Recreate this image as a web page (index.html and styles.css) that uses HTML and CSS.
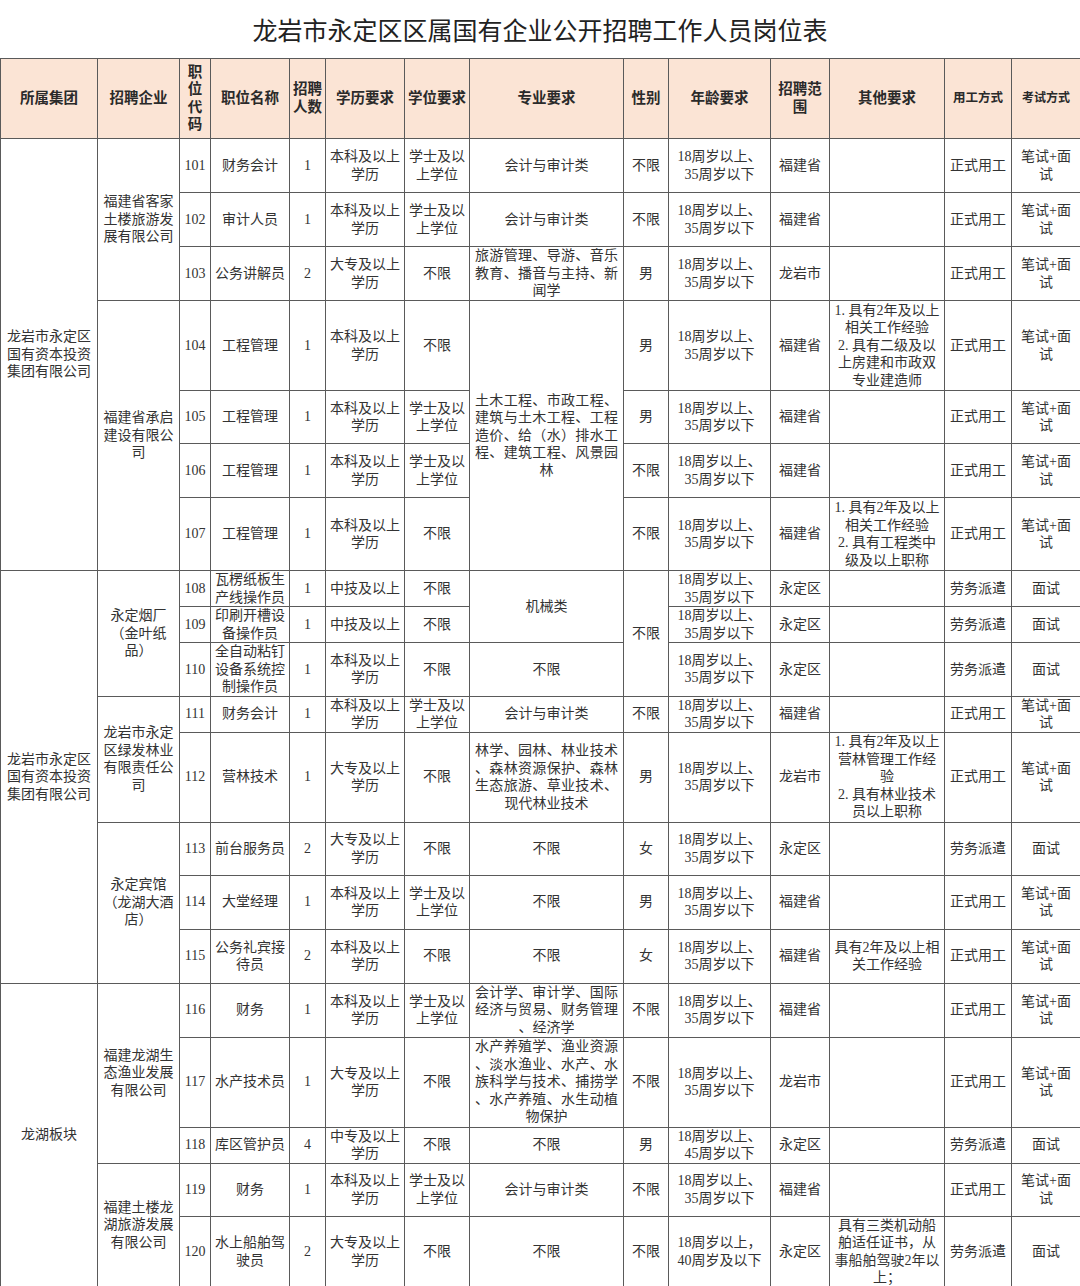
FILE: index.html
```html
<!DOCTYPE html>
<html lang="zh-CN">
<head>
<meta charset="utf-8">
<title>龙岩市永定区区属国有企业公开招聘工作人员岗位表</title>
<link rel="stylesheet" href="styles.css">
</head>
<body>
<div class="title">龙岩市永定区区属国有企业公开招聘工作人员岗位表</div>
<table class="jobs">
<colgroup>
<col class="c1"><col class="c2"><col class="c3"><col class="c4"><col class="c5"><col class="c6"><col class="c7"><col class="c8"><col class="c9"><col class="c10"><col class="c11"><col class="c12"><col class="c13"><col class="c14">
</colgroup>
<thead>
<tr class="hd">
<th>所属集团</th><th>招聘企业</th><th>职<br>位<br>代<br>码</th><th>职位名称</th><th>招聘<br>人数</th><th>学历要求</th><th>学位要求</th><th>专业要求</th><th>性别</th><th>年龄要求</th><th>招聘范<br>围</th><th>其他要求</th><th class="sm1">用工方式</th><th class="sm2">考试方式</th>
</tr>
</thead>
<tbody>
<tr class="h54">
<td rowspan="7">龙岩市永定区<br>国有资本投资<br>集团有限公司</td>
<td rowspan="3">福建省客家<br>土楼旅游发<br>展有限公司</td>
<td>101</td><td>财务会计</td><td>1</td><td>本科及以上<br>学历</td><td>学士及以<br>上学位</td><td>会计与审计类</td><td>不限</td><td>18周岁以上、<br>35周岁以下</td><td>福建省</td><td></td><td>正式用工</td><td>笔试+面<br>试</td>
</tr>
<tr class="h54">
<td>102</td><td>审计人员</td><td>1</td><td>本科及以上<br>学历</td><td>学士及以<br>上学位</td><td>会计与审计类</td><td>不限</td><td>18周岁以上、<br>35周岁以下</td><td>福建省</td><td></td><td>正式用工</td><td>笔试+面<br>试</td>
</tr>
<tr class="h54">
<td>103</td><td>公务讲解员</td><td>2</td><td>大专及以上<br>学历</td><td>不限</td><td class="just">旅游管理、导游、音乐教育、播音与主持、新闻学</td><td>男</td><td>18周岁以上、<br>35周岁以下</td><td>龙岩市</td><td></td><td>正式用工</td><td>笔试+面<br>试</td>
</tr>
<tr class="h90">
<td rowspan="4">福建省承启<br>建设有限公<br>司</td>
<td>104</td><td>工程管理</td><td>1</td><td>本科及以上<br>学历</td><td>不限</td><td rowspan="4" class="just">土木工程、市政工程、建筑与土木工程、工程造价、给（水）排水工程、建筑工程、风景园林</td><td>男</td><td>18周岁以上、<br>35周岁以下</td><td>福建省</td><td>1. 具有2年及以上<br>相关工作经验<br>2. 具有二级及以<br>上房建和市政双<br>专业建造师</td><td>正式用工</td><td>笔试+面<br>试</td>
</tr>
<tr class="h53">
<td>105</td><td>工程管理</td><td>1</td><td>本科及以上<br>学历</td><td>学士及以<br>上学位</td><td>男</td><td>18周岁以上、<br>35周岁以下</td><td>福建省</td><td></td><td>正式用工</td><td>笔试+面<br>试</td>
</tr>
<tr class="h54">
<td>106</td><td>工程管理</td><td>1</td><td>本科及以上<br>学历</td><td>学士及以<br>上学位</td><td>不限</td><td>18周岁以上、<br>35周岁以下</td><td>福建省</td><td></td><td>正式用工</td><td>笔试+面<br>试</td>
</tr>
<tr class="h73">
<td>107</td><td>工程管理</td><td>1</td><td>本科及以上<br>学历</td><td>不限</td><td>不限</td><td>18周岁以上、<br>35周岁以下</td><td>福建省</td><td>1. 具有2年及以上<br>相关工作经验<br>2. 具有工程类中<br>级及以上职称</td><td>正式用工</td><td>笔试+面<br>试</td>
</tr>
<tr class="h35">
<td rowspan="8">龙岩市永定区<br>国有资本投资<br>集团有限公司</td>
<td rowspan="3">永定烟厂<br>（金叶纸<br>品）</td>
<td>108</td><td>瓦楞纸板生<br>产线操作员</td><td>1</td><td>中技及以上</td><td>不限</td><td rowspan="2">机械类</td><td rowspan="3">不限</td><td>18周岁以上、<br>35周岁以下</td><td>永定区</td><td></td><td>劳务派遣</td><td>面试</td>
</tr>
<tr class="h36">
<td>109</td><td>印刷开槽设<br>备操作员</td><td>1</td><td>中技及以上</td><td>不限</td><td>18周岁以上、<br>35周岁以下</td><td>永定区</td><td></td><td>劳务派遣</td><td>面试</td>
</tr>
<tr class="h53">
<td>110</td><td>全自动粘钉<br>设备系统控<br>制操作员</td><td>1</td><td>本科及以上<br>学历</td><td>不限</td><td>不限</td><td>18周岁以上、<br>35周岁以下</td><td>永定区</td><td></td><td>劳务派遣</td><td>面试</td>
</tr>
<tr class="h36">
<td rowspan="2">龙岩市永定<br>区绿发林业<br>有限责任公<br>司</td>
<td>111</td><td>财务会计</td><td>1</td><td>本科及以上<br>学历</td><td>学士及以<br>上学位</td><td>会计与审计类</td><td>不限</td><td>18周岁以上、<br>35周岁以下</td><td>福建省</td><td></td><td>正式用工</td><td>笔试+面<br>试</td>
</tr>
<tr class="h90">
<td>112</td><td>营林技术</td><td>1</td><td>大专及以上<br>学历</td><td>不限</td><td class="just">林学、园林、林业技术、森林资源保护、森林生态旅游、草业技术、现代林业技术</td><td>男</td><td>18周岁以上、<br>35周岁以下</td><td>龙岩市</td><td>1. 具有2年及以上<br>营林管理工作经<br>验<br>2. 具有林业技术<br>员以上职称</td><td>正式用工</td><td>笔试+面<br>试</td>
</tr>
<tr class="h53">
<td rowspan="3">永定宾馆<br>（龙湖大酒<br>店）</td>
<td>113</td><td>前台服务员</td><td>2</td><td>大专及以上<br>学历</td><td>不限</td><td>不限</td><td>女</td><td>18周岁以上、<br>35周岁以下</td><td>永定区</td><td></td><td>劳务派遣</td><td>面试</td>
</tr>
<tr class="h54">
<td>114</td><td>大堂经理</td><td>1</td><td>本科及以上<br>学历</td><td>学士及以<br>上学位</td><td>不限</td><td>男</td><td>18周岁以上、<br>35周岁以下</td><td>福建省</td><td></td><td>正式用工</td><td>笔试+面<br>试</td>
</tr>
<tr class="h54">
<td>115</td><td>公务礼宾接<br>待员</td><td>2</td><td>本科及以上<br>学历</td><td>不限</td><td>不限</td><td>女</td><td>18周岁以上、<br>35周岁以下</td><td>福建省</td><td>具有2年及以上相<br>关工作经验</td><td>正式用工</td><td>笔试+面<br>试</td>
</tr>
<tr class="h54">
<td rowspan="5">龙湖板块</td>
<td rowspan="3">福建龙湖生<br>态渔业发展<br>有限公司</td>
<td>116</td><td>财务</td><td>1</td><td>本科及以上<br>学历</td><td>学士及以<br>上学位</td><td class="just">会计学、审计学、国际经济与贸易、财务管理、经济学</td><td>不限</td><td>18周岁以上、<br>35周岁以下</td><td>福建省</td><td></td><td>正式用工</td><td>笔试+面<br>试</td>
</tr>
<tr class="h90">
<td>117</td><td>水产技术员</td><td>1</td><td>大专及以上<br>学历</td><td>不限</td><td class="just">水产养殖学、渔业资源、淡水渔业、水产、水族科学与技术、捕捞学、水产养殖、水生动植物保护</td><td>不限</td><td>18周岁以上、<br>35周岁以下</td><td>龙岩市</td><td></td><td>正式用工</td><td>笔试+面<br>试</td>
</tr>
<tr class="h36">
<td>118</td><td>库区管护员</td><td>4</td><td>中专及以上<br>学历</td><td>不限</td><td>不限</td><td>男</td><td>18周岁以上、<br>45周岁以下</td><td>永定区</td><td></td><td>劳务派遣</td><td>面试</td>
</tr>
<tr class="h53">
<td rowspan="2">福建土楼龙<br>湖旅游发展<br>有限公司</td>
<td>119</td><td>财务</td><td>1</td><td>本科及以上<br>学历</td><td>学士及以<br>上学位</td><td>会计与审计类</td><td>不限</td><td>18周岁以上、<br>35周岁以下</td><td>福建省</td><td></td><td>正式用工</td><td>笔试+面<br>试</td>
</tr>
<tr class="h71">
<td>120</td><td>水上船舶驾<br>驶员</td><td>2</td><td>大专及以上<br>学历</td><td>不限</td><td>不限</td><td>不限</td><td>18周岁以上，<br>40周岁及以下</td><td>永定区</td><td>具有三类机动船<br>舶适任证书，从<br>事船舶驾驶2年以<br>上；</td><td>劳务派遣</td><td>面试</td>
</tr>
</tbody>
</table>
</body>
</html>
```
FILE: styles.css
```css
html, body {
  margin: 0;
  padding: 0;
  background: #ffffff;
}
body {
  font-family: "Liberation Serif", "Noto Sans CJK SC", serif;
  color: #333333;
}
.title {
  height: 58px;
  display: flex;
  align-items: center;
  justify-content: center;
  font-size: 25px;
  color: #222222;
  letter-spacing: 0;
}
.jobs {
  width: 1080px;
  border-collapse: collapse;
  table-layout: fixed;
}
.c1 { width: 97px; }
.c2 { width: 82px; }
.c3 { width: 31px; }
.c4 { width: 79px; }
.c5 { width: 36px; }
.c6 { width: 79px; }
.c7 { width: 65px; }
.c8 { width: 154px; }
.c9 { width: 45px; }
.c10 { width: 102px; }
.c11 { width: 59px; }
.c12 { width: 115px; }
.c13 { width: 67px; }
.c14 { width: 69px; }
.jobs th,
.jobs td {
  border: 1px solid #5a5a5a;
  padding: 0 2px;
  text-align: center;
  vertical-align: middle;
  font-size: 14px;
  line-height: 17.5px;
  font-weight: normal;
  white-space: nowrap;
  overflow: hidden;
}
.jobs th {
  background: #fbe4d5;
  font-weight: bold;
  color: #2a2a2a;
  font-size: 14.5px;
}
.jobs th.sm1 { font-size: 12.5px; }
.jobs th.sm2 { font-size: 12px; }
.hd { height: 80px; }
.jobs td.just {
  white-space: normal;
  text-align: justify;
  text-align-last: center;
  line-break: anywhere;
  padding: 0 5px;
}
.h35 { height: 35px; }
.h36 { height: 36px; }
.h53 { height: 53px; }
.h54 { height: 54px; }
.h71 { height: 71px; }
.h73 { height: 73px; }
.h90 { height: 90px; }
```
